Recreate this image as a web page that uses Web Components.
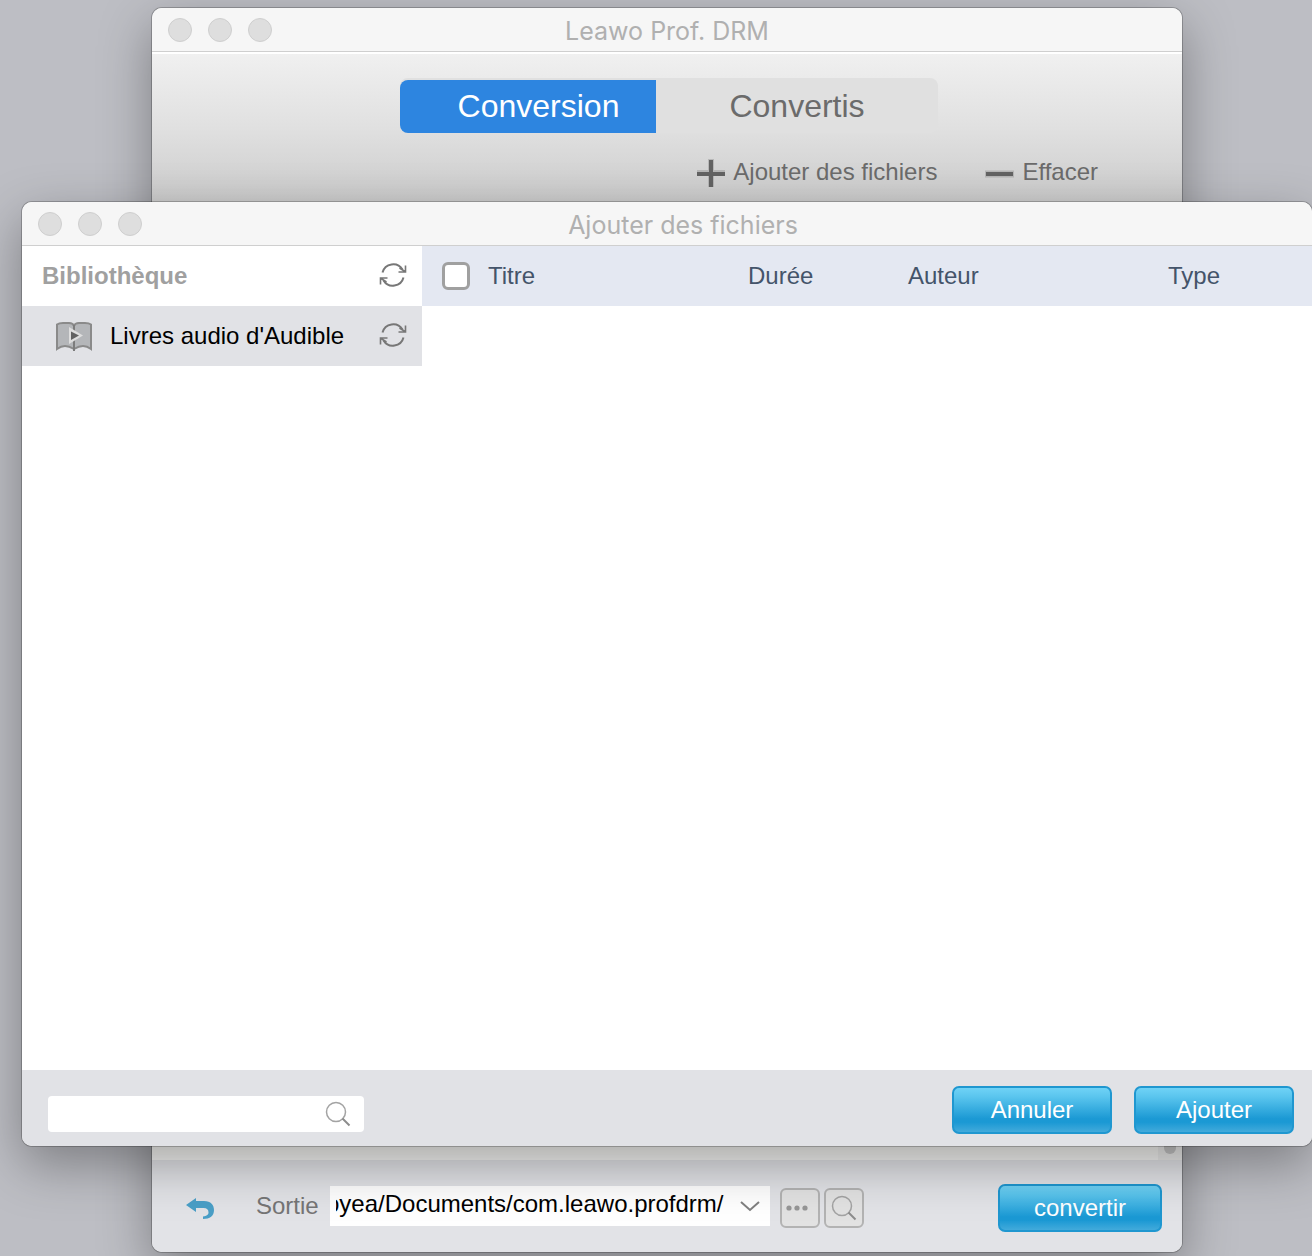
<!DOCTYPE html>
<html lang="fr">
<head>
<meta charset="utf-8">
<title>Leawo Prof. DRM</title>
<style>
  html, body { height: 100%; margin: 0; }
  body { font-family: "Liberation Sans", Arial, sans-serif; font-size: 24px; line-height: 28px; overflow: hidden; }
</style>
</head>
<body>
<drm-desktop></drm-desktop>

<script>
const define = (name, html, setup) => {
  const template = document.createElement('template');
  template.innerHTML = html;
  customElements.define(name, class extends HTMLElement {
    constructor() {
      super();
      this.attachShadow({ mode: 'open' }).append(template.content.cloneNode(true));
    }
    connectedCallback() { if (setup) setup(this, this.shadowRoot); }
  });
};

/* Window frame: title bar with the three round controls, content in the slot */
define('mac-window', `
<style>
  :host { display: flex; flex-direction: column; border-radius: 10px; background: #fff;
    box-shadow: 0 0 0 1px rgba(0,0,0,.22), 0 18px 52px rgba(0,0,0,.34); }
  .bar { display: grid; grid-template-columns: 1fr auto 1fr; align-items: center; height: 43px; flex: none;
    background: #f6f6f6; border-bottom: 1px solid #cfcfcf; border-radius: 10px 10px 0 0; }
  .lights { display: flex; gap: 16px; padding-left: 16px; }
  .lights button { width: 24px; height: 24px; padding: 0; border: 1px solid #cfcfcf; border-radius: 50%; background: #dedede; }
  .title { font: 25px/30px Inter, sans-serif; color: #b0b0b0; padding-top: 2px; padding-left: var(--title-inset, 0); }
  .body { flex: 1; min-height: 0; display: flex; flex-direction: column; border-radius: 0 0 10px 10px; overflow: hidden; }
</style>
<div class="bar">
  <div class="lights">
    <button aria-label="Fermer"></button><button aria-label="Réduire"></button><button aria-label="Agrandir"></button>
  </div>
  <div class="title"></div>
</div>
<div class="body"><slot></slot></div>`,
(host, root) => { root.querySelector('.title').textContent = host.getAttribute('caption'); });

define('gloss-button', `
<style>
  :host { display: block; width: 160px; }
  button { display: block; width: 100%; height: 48px; padding: 0; border: 2px solid #1f97d0; border-radius: 7px; color: #fff;
    font: inherit; background: linear-gradient(#6fd2f6, #5ac5ee 20%, #1b99d4 70%, #1b99d4 78%, #42aadb); }
</style>
<button><slot></slot></button>`);

define('refresh-button', `
<style>
  :host { display: block; }
  button { display: block; padding: 0 0 2px; border: 0; background: none; }
  svg { display: block; }
</style>
<button aria-label="Actualiser">
  <svg width="28" height="28" viewBox="0 0 28 28" fill="none" stroke="#777" stroke-width="2">
    <path d="M3.500 11.500A11 11 0 0 1 23.500 8.500M24.500 16.500A11 11 0 0 1 4.500 19.500"/>
    <path d="M26.500 4.500V11H19.500M26 10.500l-5.500-3.500M1.500 23.500V17H8.500M2 17.500l5.500 3.500" stroke-width="1.600"/>
  </svg>
</button>`);

define('magnifier-icon', `
<style>:host { display: block; } svg { display: block; }</style>
<svg width="26" height="26" viewBox="0 0 26 26" fill="none" stroke="#a3a3a3">
  <circle cx="11" cy="11" r="9.500" stroke-width="1.500"/><path d="M17.500 17.500l7 7" stroke="#8c8c8c" stroke-width="2"/>
</svg>`);

define('tab-switch', `
<style>
  :host { display: flex; width: 538px; height: 53px; padding-top: 2px; border-radius: 8px; background: #e0e0e0; margin: 0 auto; }
  button { flex: none; border: 0; padding: 0 0 2px; font: inherit; font-size: 32px; line-height: 36px; background: none; color: #6b6b6b; }
  .on { width: 256px; background: #2d85e0; color: #fff; border-radius: 8px 0 0 8px; padding-left: 21px; }
  .off { width: 282px; }
</style>
<button class="on">Conversion</button><button class="off">Convertis</button>`);

define('tool-bar', `
<style>
  :host { display: flex; justify-content: flex-end; gap: 48px; padding-right: 84px; }
  button { display: flex; align-items: center; gap: 8px; border: 0; padding: 0; background: none; font: inherit; color: #6b6b6b; }
  svg { display: block; }
</style>
<button>
  <svg width="28" height="30" viewBox="0 0 28 30"><path d="M0 16h28M14 2v28" stroke="#999" stroke-opacity=".5" stroke-width="6"/><path d="M0 17h28M14 3v27" stroke="#636363" stroke-width="4"/></svg>
  Ajouter des fichiers
</button>
<button>
  <svg width="29" height="30" viewBox="0 0 29 30"><path d="M0 17h29" stroke="#999" stroke-opacity=".5" stroke-width="7"/><path d="M1 17h27" stroke="#636363" stroke-width="4"/></svg>
  Effacer
</button>`);

define('output-bar', `
<style>
  :host { display: flex; align-items: center; height: 92px; flex: none; padding: 0 20px 0 34px; background: #e2e3e7; }
  .undo { border: 0; padding: 6px 0 0; background: none; }
  svg { display: block; }
  label { color: #757575; margin-left: 42px; width: 74px; }
  .combo { display: flex; align-items: center; width: 440px; height: 40px; background: #fff; }
  input { width: 388px; height: 32px; margin: 0 16px 4px 6px; padding: 0; border: 0; outline: 0; background: none; font: inherit; color: #000; }
  .combo button { border: 0; padding: 0; background: none; }
  .tools { display: flex; gap: 4px; margin: 4px auto 0 10px; }
  .tools button { display: flex; align-items: center; justify-content: center; width: 40px; height: 40px; padding: 0; border: 2px solid #b3b3b3; border-radius: 6px; background: #e2e2e2; }
  .tools .more { padding-right: 6px; }
  gloss-button { width: 164px; padding-top: 4px; }
</style>
<button class="undo" aria-label="Retour">
  <svg width="28" height="24" viewBox="0 0 28 24"><path d="M0 8L10 1v3h8c7 0 10 4 10 9 0 6-4 9-11 9v-2.500c4-.5 5.500-2 5.500-4 0-3-1.500-4.500-5-4.500H10v4z" fill="#4a9fc7"/></svg>
</button>
<label for="path">Sortie</label>
<div class="combo">
  <input id="path" type="text" value="oyea/Documents/com.leawo.profdrm/">
  <button aria-label="Choisir un dossier"><svg width="20" height="12" viewBox="0 0 20 12"><path d="M1 2l9 8 9-8" fill="none" stroke="#808080" stroke-width="2"/></svg></button>
</div>
<div class="tools">
  <button class="more" aria-label="Parcourir"><svg width="22" height="6" viewBox="0 0 22 6" fill="#969696"><circle cx="3" cy="3" r="2.600"/><circle cx="11" cy="3" r="2.600"/><circle cx="19" cy="3" r="2.600"/></svg></button>
  <button aria-label="Ouvrir le dossier"><magnifier-icon></magnifier-icon></button>
</div>
<gloss-button>convertir</gloss-button>`,
(host, root) => { const i = root.querySelector('input'); i.scrollLeft = i.scrollWidth; });

define('converter-view', `
<style>
  :host { display: flex; flex-direction: column; flex: 1; min-height: 0; }
  header { height: 152px; flex: none; box-sizing: border-box; border-top: 2px solid #fff; padding-top: 24px; padding-left: 4px; background: linear-gradient(#f0f0f0, #e0e0e0 50%, #cbcbcb) padding-box; }
  tool-bar { margin-top: 24px; }
  .list { flex: 1; display: flex; justify-content: flex-end; background: #f7f7f5; }
  .track { display: flex; align-items: flex-end; justify-content: center; width: 24px; padding-bottom: 6px; box-sizing: border-box; background: #ededec; }
  .thumb { width: 12px; height: 60px; border-radius: 6px; background: #c6c6c6; }
</style>
<header><tab-switch></tab-switch><tool-bar></tool-bar></header>
<div class="list"><div class="track"><div class="thumb"></div></div></div>
<output-bar></output-bar>`);

define('library-list', `
<style>
  :host { display: block; width: 400px; flex: none; background: #fff; }
  .row { display: flex; align-items: center; justify-content: space-between; height: 60px; padding: 0 15px 0 20px; }
  .head { font-weight: bold; color: #a0a0a0; }
  .item { background: #e1e2e6; color: #000; padding-left: 33px; }
  .item a { display: flex; align-items: center; gap: 17px; color: inherit; text-decoration: none; }
  svg { display: block; }
</style>
<div class="row head"><span>Bibliothèque</span><refresh-button></refresh-button></div>
<div class="row item">
  <a href="#audible">
    <svg width="38" height="30" viewBox="0 0 38 30">
      <path d="M2 3.500Q4 2 8 2H14Q18 2 19 5Q20 2 24 2H30Q34 2 36 3.500V28Q32 25 28 25T19 28Q14 25 10 25T2 28Z" fill="#b4b6b9" stroke="#8a8a8a" stroke-width="2"/>
      <path d="M19 4V30" stroke="#7c7c7c" stroke-width="2"/>
      <path d="M14 6l14 8.500-14 8.500z" fill="#dedede"/><path d="M16 10.500l8 4-8 4.500z" fill="#626262"/>
    </svg>
    Livres audio d'Audible
  </a>
  <refresh-button></refresh-button>
</div>`);

define('file-table', `
<style>
  :host { display: block; flex: 1; background: #fff; }
  table { width: 100%; border-collapse: collapse; table-layout: fixed; }
  th { height: 60px; padding: 0; text-align: left; font-weight: normal; color: #44546a; background: #e4e8f2; }
  .t { width: 326px; } .d { width: 160px; } .a { width: 260px; }
  label { display: flex; align-items: center; gap: 18px; padding-left: 20px; }
  input { appearance: none; width: 28px; height: 28px; margin: 0; border: 3px solid #a0a0a0; border-radius: 6px; background: #fff; }
</style>
<table><thead><tr>
  <th class="t"><label><input type="checkbox">Titre</label></th><th class="d">Durée</th><th class="a">Auteur</th><th>Type</th>
</tr></thead></table>`);

define('add-files-view', `
<style>
  :host { display: flex; flex-direction: column; flex: 1; min-height: 0; }
  main { flex: 1; display: flex; }
  footer { display: flex; align-items: center; height: 76px; flex: none; padding: 0 18px 0 26px; gap: 22px; background: #e1e2e6; }
  .search { display: flex; align-items: center; width: 316px; height: 36px; margin: 12px auto 0 0; padding-right: 13px; box-sizing: border-box; border-radius: 4px; background: #fff; }
  input { flex: 1; min-width: 0; height: 100%; border: 0; outline: 0; padding: 0 8px; background: none; font: inherit; box-sizing: border-box; }
  gloss-button { padding-top: 4px; }
</style>
<main><library-list></library-list><file-table></file-table></main>
<footer>
  <div class="search"><input type="text" aria-label="Rechercher"><magnifier-icon></magnifier-icon></div>
  <gloss-button>Annuler</gloss-button><gloss-button>Ajouter</gloss-button>
</footer>`);

/* The desktop holds two freely placed, overlapping windows */
define('drm-desktop', `
<style>
  :host { display: block; position: relative; height: 100vh; overflow: hidden; background: #bdbec4; }
  mac-window { position: absolute; }
  .app { inset: 8px 130px 4px 152px; }
  .dialog { inset: 202px 0 110px 22px; --title-inset: 32px; }
</style>
<mac-window class="app" caption="Leawo Prof. DRM"><converter-view></converter-view></mac-window>
<mac-window class="dialog" caption="Ajouter des fichiers"><add-files-view></add-files-view></mac-window>`);
</script>
</body>
</html>
